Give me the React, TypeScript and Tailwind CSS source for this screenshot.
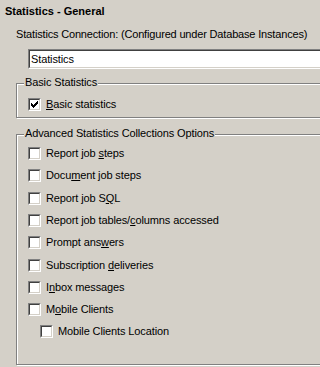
import React from "react";

const CHECK_ROWS = [
  [6, 1],
  [5, 2],
  [0, 1, 4, 3],
  [0, 2, 3, 3],
  [0, 5],
  [1, 3],
  [2, 1],
];

function CheckMark() {
  return (
    <svg width="7" height="7" viewBox="0 0 7 7" shapeRendering="crispEdges">
      {CHECK_ROWS.map((row, y) => {
        const rects = [];
        for (let i = 0; i < row.length; i += 2) {
          rects.push(<rect key={`${y}-${i}`} x={row[i]} y={y} width={row[i + 1]} height="1" fill="#000" />);
        }
        return rects;
      })}
    </svg>
  );
}

function CheckBox({ checked }: { checked?: boolean }) {
  return (
    <div className="w-[13px] h-[13px] shrink-0 border border-t-[#808080] border-l-[#808080] border-b-white border-r-white">
      <div className="w-full h-full border border-t-[#404040] border-l-[#404040] border-b-[#d4d0c8] border-r-[#d4d0c8] bg-white flex items-center justify-center">
        {checked && <CheckMark />}
      </div>
    </div>
  );
}

function Label({ pre, key_, post }: { pre: string; key_: string; post: string }) {
  return (
    <span className="whitespace-nowrap">
      {pre}
      <u className="underline decoration-1 underline-offset-[1px]">{key_}</u>
      {post}
    </span>
  );
}

type Row = { pre: string; k: string; post: string; h: string; indent?: boolean };

const rows: Row[] = [
  { pre: "Report job ", k: "s", post: "teps", h: "h-[22px]" },
  { pre: "Docu", k: "m", post: "ent job steps", h: "h-[23px]" },
  { pre: "Report job S", k: "Q", post: "L", h: "h-[22px]" },
  { pre: "Report job tables/", k: "c", post: "olumns accessed", h: "h-[22px]" },
  { pre: "Prompt ans", k: "w", post: "ers", h: "h-[23px]" },
  { pre: "Subscription ", k: "d", post: "eliveries", h: "h-[22px]" },
  { pre: "I", k: "n", post: "box messages", h: "h-[22px]" },
  { pre: "M", k: "o", post: "bile Clients", h: "h-[22px]" },
  { pre: "Mobile Clients Location", k: "", post: "", h: "h-[22px]", indent: true },
];

function Group({ title, className, children }: { title: string; className: string; children: React.ReactNode }) {
  return (
    <div
      className={`relative ml-[16px] w-[320px] border border-[#808080] shadow-[inset_1px_1px_0_#fff,1px_1px_0_#fff] ${className}`}
    >
      <span className="absolute top-[-8px] left-[7px] px-[1px] bg-[#d4d0c8] leading-[13px] whitespace-nowrap">
        {title}
      </span>
      {children}
    </div>
  );
}

export default function App() {
  return (
    <div className="w-[320px] h-[367px] overflow-hidden bg-[#d4d0c8] text-[11px] text-black tracking-[-0.12px] font-['Liberation_Sans',Arial,sans-serif]">
      <div className="mt-[4px] ml-[5px] h-[14px] leading-[14px] font-bold tracking-normal">Statistics - General</div>
      <div className="mt-[9px] ml-[16px] h-[14px] leading-[14px] whitespace-nowrap tracking-[-0.17px]">
        Statistics Connection: (Configured under Database Instances)
      </div>

      {/* sunken text box */}
      <div className="mt-[8px] ml-[28px] w-[310px] h-[20px] border border-t-[#808080] border-l-[#808080] border-b-white border-r-white">
        <div className="h-full border border-t-[#404040] border-l-[#404040] border-b-[#d4d0c8] border-r-[#d4d0c8] bg-white pl-[1px] leading-[16px]">
          Statistics
        </div>
      </div>

      <Group title="Basic Statistics" className="mt-[14px] h-[35px]">
        <div className="pt-[14px] pl-[11px] flex items-center">
          <CheckBox checked />
          <span className="ml-[5px] leading-[13px]">
            <Label pre="" key_="B" post="asic statistics" />
          </span>
        </div>
      </Group>

      <Group title="Advanced Statistics Collections Options" className="mt-[16px] h-[231px]">
        <div className="pt-[12px] pl-[11px] flex flex-col">
          {rows.map((r) => (
            <div key={r.pre + r.post} className={`${r.h} ${r.indent ? "pl-[12px]" : ""}`}>
              <div className="flex items-center h-[13px]">
                <CheckBox />
                <span className="ml-[5px] leading-[13px]">
                  {r.k ? <Label pre={r.pre} key_={r.k} post={r.post} /> : r.pre}
                </span>
              </div>
            </div>
          ))}
        </div>
      </Group>
    </div>
  );
}
